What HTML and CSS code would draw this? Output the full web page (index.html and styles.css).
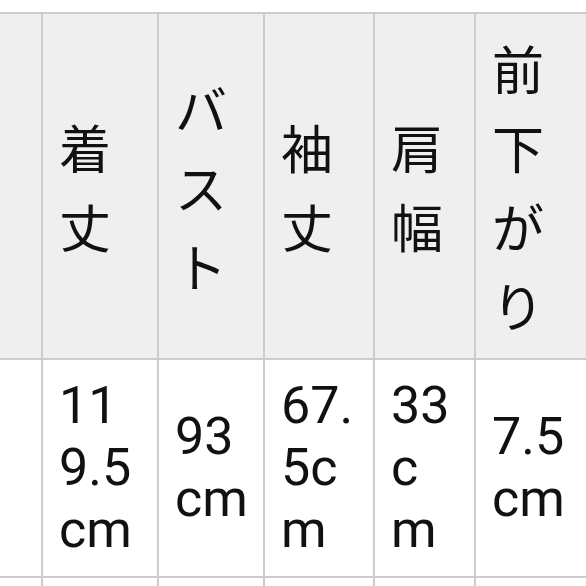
FILE: index.html
```html
<!DOCTYPE html>
<html lang="ja">
<head>
<meta charset="utf-8">
<title>サイズ表</title>
<link rel="stylesheet" href="styles.css">
</head>
<body>
<table class="size-table">
  <colgroup>
    <col class="c0"><col class="c1"><col class="c2"><col class="c3"><col class="c4"><col class="c5">
  </colgroup>
  <thead>
    <tr class="head-row">
      <th class="cell"></th>
      <th class="cell">着丈</th>
      <th class="cell">バスト</th>
      <th class="cell">袖丈</th>
      <th class="cell">肩幅</th>
      <th class="cell">前下がり</th>
    </tr>
  </thead>
  <tbody>
    <tr class="data-row">
      <td class="cell"></td>
      <td class="cell">119.5cm</td>
      <td class="cell">93cm</td>
      <td class="cell">67.5cm</td>
      <td class="cell">33cm</td>
      <td class="cell">7.5cm</td>
    </tr>
    <tr class="next-row">
      <td class="cell"></td>
      <td class="cell"></td>
      <td class="cell"></td>
      <td class="cell"></td>
      <td class="cell"></td>
      <td class="cell"></td>
    </tr>
  </tbody>
</table>
</body>
</html>
```
FILE: styles.css
```css
html, body {
  margin: 0;
  padding: 0;
  background: #ffffff;
  overflow: hidden;
  width: 586px;
  height: 586px;
}

body {
  padding-top: 12px;
  box-sizing: border-box;
}

.size-table {
  table-layout: fixed;
  border-collapse: separate;
  border-spacing: 0;
  border-top: 2px solid #cccccc;
  width: 596px;
  color: #111111;
  font-size: 52px;
}

.c0 { width: 43px; }
.c1 { width: 116px; }
.c2 { width: 106px; }
.c3 { width: 110px; }
.c4 { width: 101px; }
.c5 { width: 120px; }

.cell {
  border-right: 2px solid #cccccc;
  border-bottom: 2px solid #cccccc;
  padding: 0 13px 0 16px;
  text-align: left;
  vertical-align: middle;
  word-break: break-all;
}

.head-row .cell {
  background: #efefef;
  height: 344px;
  font-weight: normal;
  font-family: "Noto Sans CJK JP", "Noto Sans", sans-serif;
  line-height: 79px;
}

.data-row .cell {
  background: #ffffff;
  height: 216px;
  font-family: Roboto, "Noto Sans CJK JP", sans-serif;
  line-height: 62px;
}

.next-row .cell {
  height: 120px;
  background: #ffffff;
}
```
